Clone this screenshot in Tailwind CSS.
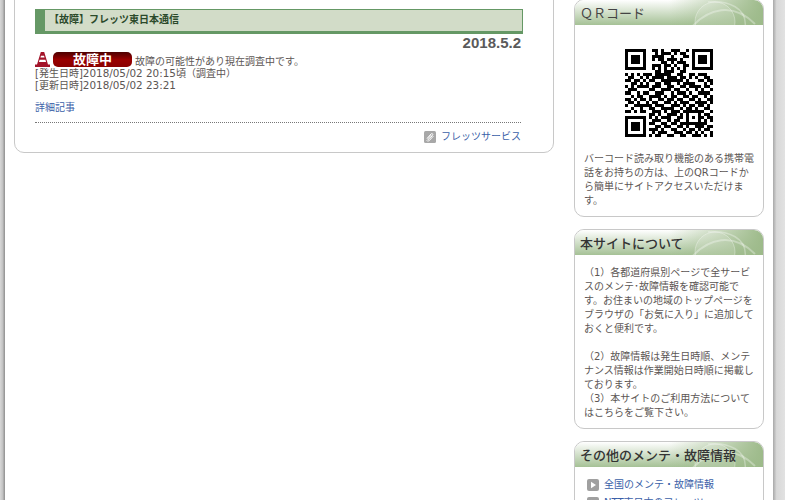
<!DOCTYPE html>
<html lang="ja">
<head>
<meta charset="utf-8">
<script src="https://cdn.jsdelivr.net/npm/@tailwindcss/browser@4"></script>
<title>故障情報</title>
</head>
<body class="bg-white">
<div class="flex h-[500px] w-[785px] overflow-hidden font-['DejaVu_Sans','Noto_Sans_CJK_JP',sans-serif] text-[10px] leading-[14px] text-[#5c5654]">
  <div class="w-[5px] shrink-0 bg-linear-to-r from-[#d8d8d8] via-[#c4c4c4] to-[#8f8f8f]"></div>

  <main class="w-[549px] shrink-0 pl-[9px]">
    <section class="-mt-[10px] h-[163px] w-[540px] rounded-[10px] border border-[#c8c8c8] pl-[20px] pt-[18px]">
      <div class="w-[488px]">
        <h2 class="h-[25px] border-t border-r border-b-[3px] border-[#659865] border-l-[10px] bg-[#d2dcc8] pl-[4px] text-[10px] font-bold leading-[20px] text-[#2b4a2b]">【故障】フレッツ東日本通信</h2>
        <p class="h-[18px] pr-[2px] text-right font-['Liberation_Sans',sans-serif] text-[15px] font-bold leading-[18px] text-[#5a5a5a]">2018.5.2</p>
        <div class="flex h-[15px] items-start">
          <svg class="mr-[3px] shrink-0" width="15" height="15" viewBox="0 0 15 15"><path d="M5.800 0h3.400L13 12.500h2V15H0v-2.500h2z" fill="#a3142a"/><path d="M6 3.800h3l.6 1.800H5.400zM4.600 7.800h5.800l.7 2.200H3.900z" fill="#fff"/></svg>
          <span class="flex h-[15px] w-[79px] shrink-0 items-center justify-center rounded-[5px] bg-linear-to-b from-[#4d0000] via-[#990000] to-[#8a0000] text-[13px] font-bold leading-[15px] text-white">故障中</span>
          <span class="ml-[3px] mt-[4px] whitespace-nowrap leading-[12px]">故障の可能性があり現在調査中です。</span>
        </div>
        <p class="mt-[1px] h-[12px] overflow-visible leading-[12px]">[発生日時]<span class="text-[10.4px] leading-[10px]">2018/05/02 20:15</span>頃（調査中）</p>
        <p class="h-[12px] overflow-visible leading-[12px]">[更新日時]<span class="text-[10.4px] leading-[10px]">2018/05/02 23:21</span></p>
        <p class="mt-[10px] leading-[12px]"><a class="text-[#3b5fa8]" href="#">詳細記事</a></p>
        <div class="mt-[8px] mr-[2px] border-t border-dotted border-[#777]"></div>
        <div class="mt-[7px] flex items-center justify-end pr-[2px] leading-[14px]">
          <svg class="mr-[5px]" width="12" height="12" viewBox="0 0 12 12"><rect width="12" height="12" rx="1.500" fill="#a8a8a8"/><path d="M3 7.500 7 3c1-1 2.500 0 1.500 1.300L5 8.500c-.6.7-1.500 0-1-.8l3.200-3.600" fill="none" stroke="#fff" stroke-width="1"/><path d="M2.500 9.500C4 10.500 5 10 6 9l3.500-4" fill="none" stroke="#fff" stroke-width=".8"/></svg>
          <a class="text-[#3b5fa8]" href="#">フレッツサービス</a>
        </div>
      </div>
    </section>
  </main>

  <aside class="ml-[20px] -mt-px flex w-[190px] shrink-0 flex-col gap-[12px]">
    <section class="h-[218px] shrink-0 rounded-[10px] border border-[#c8c8c8]">
      <h3 class="relative h-[25px] overflow-hidden rounded-t-[9px] bg-linear-to-b from-white to-[#a6c196] pl-[5px] text-[13px] leading-[27px] text-[#444]">
        <span class="relative z-10">ＱＲコード</span>
        <span class="absolute inset-0 bg-linear-to-r from-transparent via-transparent to-[#9dba8a]"></span>
        <svg class="absolute right-0 top-0" width="90" height="26" viewBox="0 0 90 26"><g fill="#fff" fill-opacity=".14" stroke="#fff" stroke-opacity=".32"><ellipse cx="42" cy="22" rx="20" ry="20"/><path d="M18 28C35 8 60 2 82 24" fill="none" stroke-width="2"/><path d="M35 2c20-2 40 6 37 26" fill="none" stroke-width="1.500"/></g></svg>
      </h3>
      <svg class="mx-auto mt-[24px]" width="88" height="88" viewBox="0 0 29 29" shape-rendering="crispEdges"><path id="qr" fill="none" stroke="#000" stroke-width="1"/></svg>
      <p class="mt-[15px] px-[9px]">バーコード読み取り機能のある携帯電<br>話をお持ちの方は、上のQRコードか<br>ら簡単にサイトアクセスいただけま<br>す。</p>
    </section>

    <section class="h-[200px] shrink-0 rounded-[10px] border border-[#c8c8c8]">
      <h3 class="relative h-[25px] overflow-hidden rounded-t-[9px] bg-linear-to-b from-white to-[#a6c196] pl-[5px] text-[13px] font-medium leading-[27px] text-[#333]">
        <span class="relative z-10">本サイトについて</span>
        <span class="absolute inset-0 bg-linear-to-r from-transparent via-transparent to-[#9dba8a]"></span>
        <svg class="absolute right-0 top-0" width="90" height="26" viewBox="0 0 90 26"><g fill="#fff" fill-opacity=".14" stroke="#fff" stroke-opacity=".32"><ellipse cx="42" cy="22" rx="20" ry="20"/><path d="M18 28C35 8 60 2 82 24" fill="none" stroke-width="2"/><path d="M35 2c20-2 40 6 37 26" fill="none" stroke-width="1.500"/></g></svg>
      </h3>
      <p class="mt-[11px] px-[9px]">（1）各都道府県別ページで全サービ<br>スのメンテ･故障情報を確認可能で<br>す。お住まいの地域のトップページを<br>ブラウザの「お気に入り」に追加して<br>おくと便利です。<br><br>（2）故障情報は発生日時順、メンテ<br>ナンス情報は作業開始日時順に掲載し<br>ております。<br>（3）本サイトのご利用方法について<br>はこちらをご覧下さい。</p>
    </section>

    <section class="h-[100px] shrink-0 rounded-[10px] border border-[#c8c8c8]">
      <h3 class="relative h-[25px] overflow-hidden rounded-t-[9px] bg-linear-to-b from-white to-[#a6c196] pl-[5px] text-[13px] font-medium leading-[27px] text-[#333]">
        <span class="relative z-10">その他のメンテ・故障情報</span>
        <span class="absolute inset-0 bg-linear-to-r from-transparent via-transparent to-[#9dba8a]"></span>
        <svg class="absolute right-0 top-0" width="90" height="26" viewBox="0 0 90 26"><g fill="#fff" fill-opacity=".14" stroke="#fff" stroke-opacity=".32"><ellipse cx="42" cy="22" rx="20" ry="20"/><path d="M18 28C35 8 60 2 82 24" fill="none" stroke-width="2"/><path d="M35 2c20-2 40 6 37 26" fill="none" stroke-width="1.500"/></g></svg>
      </h3>
      <ul class="mt-[11px] flex flex-col gap-[4px] pl-[12px]">
        <li class="flex items-center gap-[5px]">
          <svg width="12" height="12" viewBox="0 0 12 12"><rect width="12" height="12" rx="2" fill="#a0a0a0"/><path d="M4 2.800v6.400L9 6z" fill="#fff"/></svg>
          <a class="text-[#3b5fa8]" href="#">全国のメンテ・故障情報</a>
        </li>
        <li class="flex items-center gap-[5px]">
          <svg width="12" height="12" viewBox="0 0 12 12"><rect width="12" height="12" rx="2" fill="#a0a0a0"/><path d="M4 2.800v6.400L9 6z" fill="#fff"/></svg>
          <a class="text-[#3b5fa8]" href="#">NTT東日本のフレッツ</a>
        </li>
      </ul>
    </section>
  </aside>

  <div class="ml-[9px] w-[12px] shrink-0 bg-linear-to-r from-[#a8a8a8] via-[#d8d8d8] via-30% to-[#e2e2e2]"></div>
</div>
<script>
  var mid = ["011010011100100","001011101011010","011110010001100","010110111010010","000011010111000","011101101001110","010101010101010","001101110011000"];
  var tl = ["1111111","1000001","1011101","1011101","1011101","1000001","1111111","0000000"];
  var body = [
    "10101011101111100110011011100","01100101011110111011010100110","11011010110011111110100011011",
    "00110101001101100101111000101","10101111011100110011011110110","01110000110011101100100101001",
    "11001011001110010111010011110","00101100111101011001101100101","11010110100110110110011010011",
    "01101001011001101011100111101","10011111101110011101011011010","00100100110011110010110100110",
    "11010110011101011101111111001","00000000110100111010100010110","11111110101011100110101011011",
    "10000010011100101100100010101","10111010110011011011111111100","10111010001101100110100111011",
    "10111010111010011001011010110","10000010010111001110110101001","11111110101100110011001110101"
  ];
  var grid = [];
  for (var i = 0; i < 8; i++) grid.push(tl[i] + "0" + mid[i].slice(0, 13) + "0" + tl[i]);
  grid = grid.concat(body);
  var d = "";
  grid.forEach(function (r, y) {
    for (var x = 0; x < r.length; x++) {
      if (r[x] === "1") {
        var s = x;
        while (r[x + 1] === "1") x++;
        d += "M" + s + " " + (y + .5) + "h" + (x - s + 1);
      }
    }
  });
  document.getElementById("qr").setAttribute("d", d);
</script>
</body>
</html>
